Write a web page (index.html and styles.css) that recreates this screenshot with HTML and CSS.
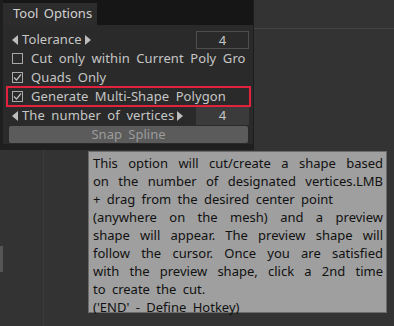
FILE: index.html
```html
<!DOCTYPE html>
<html lang="en">
<head>
    <meta charset="UTF-8">
    <meta name="viewport" content="width=device-width, initial-scale=1.0">
    <title>Tool Options</title>
    <link rel="stylesheet" href="styles.css">
</head>
<body>
    <!-- Tool Options panel -->
    <div class="panel">
        <div class="header">
            <div class="tab">Tool Options</div>
        </div>
        <div class="rows">
            <div class="row">
                <span class="arrow left"></span>
                <span class="label">Tolerance</span>
                <span class="arrow right"></span>
                <span class="value boxed">4</span>
            </div>
            <div class="row">
                <span class="check"></span>
                <span class="label clip">Cut only within Current Poly Gro</span>
            </div>
            <div class="row">
                <span class="check">
                    <svg viewBox="0 0 11 11" width="11" height="11"><path d="M2 5.5 L4.5 8 L9 2.5" fill="none" stroke="#bdbdbd" stroke-width="1.2"/></svg>
                </span>
                <span class="label">Quads Only</span>
            </div>
            <div class="row selected">
                <span class="check">
                    <svg viewBox="0 0 11 11" width="11" height="11"><path d="M2 5.5 L4.5 8 L9 2.5" fill="none" stroke="#bdbdbd" stroke-width="1.2"/></svg>
                </span>
                <span class="label">Generate Multi-Shape Polygon</span>
            </div>
            <div class="row">
                <span class="arrow left"></span>
                <span class="label">The number of vertices</span>
                <span class="arrow right"></span>
                <span class="value filled">4</span>
            </div>
            <button class="snap">Snap Spline</button>
        </div>
    </div>

    <!-- Tooltip for the hovered option -->
    <div class="tooltip">
        <div class="line full">This option will cut/create a shape based</div>
        <div class="line full">on the number of designated vertices.LMB</div>
        <div class="line">+ drag from the desired center point</div>
        <div class="line full">(anywhere on the mesh) and a preview</div>
        <div class="line full">shape will appear. The preview shape will</div>
        <div class="line full">follow the cursor. Once you are satisfied</div>
        <div class="line full">with the preview shape, click a 2nd time</div>
        <div class="line">to create the cut.</div>
        <div class="line">('END' - Define Hotkey)</div>
    </div>
</body>
</html>
```

FILE: styles.css
```css
body {
    margin: 0;
    height: 326px;
    font-family: "Noto Sans", sans-serif;
    font-size: 13px;
    word-spacing: 3px;
    background-color: #333;
    background-image:
        linear-gradient(#444, #444),
        linear-gradient(#3b3b3b, #3b3b3b),
        linear-gradient(#555, #555);
    background-size: 141px 1px, 1px 176px, 3px 26px;
    background-position: 253px 28px, 43px 150px, 0 246px;
    background-repeat: no-repeat;
    overflow: hidden;
}
.panel {
    width: 254px;
    box-sizing: border-box;
    background-color: #2a2a2a;
    border-left: 3px solid #1e1e1e;
    border-right: 1px solid #1d1d1d;
    border-bottom: 6px solid #1f1f1f;
}
.header {
    height: 25px;
    background-color: #161616;
    display: flex;
    align-items: flex-end;
}
.tab {
    width: 94px;
    height: 22px;
    box-sizing: border-box;
    padding-left: 10px;
    line-height: 21px;
    background-color: #2c2c2c;
    color: #d2d2d2;
    word-spacing: 2px;
}
.rows {
    padding: 5px 4px 1px 6px;
}
.row {
    height: 19px;
    display: flex;
    align-items: center;
    padding-left: 3px;
    color: #c6c6c6;
    white-space: nowrap;
    letter-spacing: 0.1px;
}
.row.selected {
    outline: 2px solid #e2233d;
    outline-offset: -1px;
    margin: 0 -1px 0 -2px;
    padding-left: 5px;
}
.label {
    line-height: 19px;
}
.clip {
    overflow: hidden;
    flex: 1;
}
.arrow {
    width: 0;
    height: 0;
    border-top: 5px solid transparent;
    border-bottom: 5px solid transparent;
}
.arrow.left {
    border-right: 6px solid #bdbdbd;
    margin-right: 4px;
}
.arrow.right {
    border-left: 6px solid #bdbdbd;
    margin-left: 3px;
}
.check {
    width: 11px;
    height: 11px;
    box-sizing: border-box;
    border: 1px solid #a9a9a9;
    margin-right: 8px;
    display: flex;
}
.check svg {
    margin: -1px;
}
.value {
    margin-left: auto;
    width: 53px;
    height: 18px;
    box-sizing: border-box;
    text-align: center;
    line-height: 17px;
    color: #c6c6c6;
}
.value.boxed {
    border: 1px solid #4e4e4e;
}
.value.filled {
    background-color: #3b3b3b;
}
.snap {
    display: block;
    width: 239px;
    height: 17px;
    margin: 1px 0 0 0;
    padding: 0;
    border: none;
    border-radius: 2px;
    background-color: #5b5b5b;
    color: #9c9c9c;
    font-family: "Noto Sans", sans-serif;
    font-size: 13px;
    word-spacing: 3px;
    line-height: 17px;
}
.tooltip {
    position: absolute;
    left: 88px;
    top: 151px;
    width: 299px;
    height: 162px;
    box-sizing: border-box;
    padding: 2px 3px 0 4px;
    background-color: #9f9f9f;
    border: 1px solid #6b6b6b;
    color: #111;
    line-height: 18px;
}
.line {
    white-space: nowrap;
}
.line.full {
    white-space: normal;
    text-align: justify;
    text-align-last: justify;
}
```
